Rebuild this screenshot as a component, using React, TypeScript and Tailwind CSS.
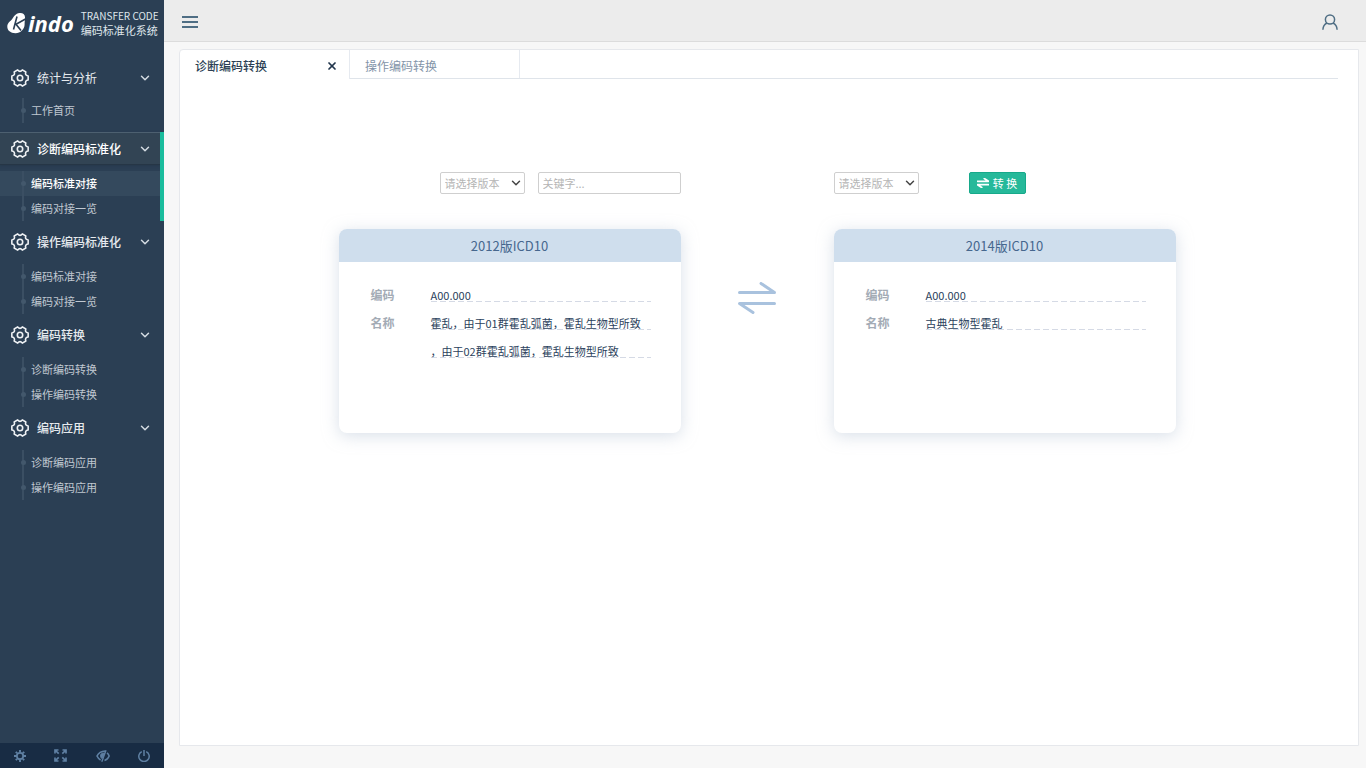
import { useState } from "react"
import { ChevronDown, X } from "lucide-react"

type Group = { title: string; items: string[] }

const groups: Group[] = [
  { title: "统计与分析", items: ["工作首页"] },
  { title: "诊断编码标准化", items: ["编码标准对接", "编码对接一览"] },
  { title: "操作编码标准化", items: ["编码标准对接", "编码对接一览"] },
  { title: "编码转换", items: ["诊断编码转换", "操作编码转换"] },
  { title: "编码应用", items: ["诊断编码应用", "操作编码应用"] },
]

// point on a circle around the centre of the 20x20 gear
function polar(deg: number, r: number) {
  const a = (deg * Math.PI) / 180
  return `${(10 + r * Math.cos(a)).toFixed(2)} ${(10 + r * Math.sin(a)).toFixed(2)}`
}

// six flat lobes joined by shallow dips
const gearPath =
  `M${polar(-14, 8.4)}` +
  [0, 60, 120, 180, 240, 300]
    .map((a) => `L${polar(a + 14, 8.4)}Q${polar(a + 30, 5.2)} ${polar(a + 46, 8.4)}`)
    .join("") +
  "Z"

function Gear() {
  return (
    <svg
      viewBox="0 0 20 20"
      className="size-5 shrink-0 text-[#eef1f4]"
      fill="none"
      stroke="currentColor"
      strokeWidth="1.600"
      strokeLinejoin="round"
      aria-hidden="true"
    >
      <path d={gearPath} />
      <circle cx="10" cy="10" r="2.700" />
    </svg>
  )
}

function Logo() {
  return (
    <div className="flex h-[45px] items-center pl-[7px]">
      <svg viewBox="0 0 20 22" className="h-[22px] w-5 shrink-0" aria-hidden="true">
        <path
          d="M12.500 1C15.500 .6 17.800 2.200 18 5C18.200 8 17.500 9.500 17.600 12.500C17.600 17 13.500 21.200 8.500 21.200C3.500 21.200 .3 18.500 .3 14.800C.3 10.500 3.200 9.800 5.200 7C7 4.300 8.500 1.500 12.500 1Z"
          fill="#fff"
        />
        <path d="M10 4.500L6.500 17.500M18.500 7L9 12.200L14 18.500" fill="none" stroke="#2b3f54" strokeWidth="1.600" />
      </svg>
      <span className="ml-px font-['Noto_Sans','Open_Sans',sans-serif] text-[22px] leading-[22px] font-bold text-white italic">
        indo
      </span>
      <div className="ml-[7px] text-[#dfe5eb] whitespace-nowrap">
        <div className="text-[10px] leading-[15px]">TRANSFER CODE</div>
        <div className="text-[11px] leading-[15px]">编码标准化系统</div>
      </div>
    </div>
  )
}

function MenuGroup({ group, active, first }: { group: Group; active: boolean; first: boolean }) {
  return (
    <section className={`flex ${first ? "mb-[9px]" : "mb-1"}`}>
      <div className="min-w-0 flex-1">
        <button
          className={`flex h-[33px] w-full items-center border-y pl-2.5 text-[12px] ${
            active
              ? "border-t-[#4d6070] border-b-[#263646] bg-[#324454] pr-2 font-medium text-white shadow-[0_1px_2px_#22334480]"
              : "border-transparent pr-3 text-[#e6eaee]"
          } ${first ? "font-normal" : "font-medium"}`}
        >
          <Gear />
          <span className="ml-[7px] flex-1 text-left">{group.title}</span>
          <ChevronDown className="size-3.5 text-[#d5dce3]" strokeWidth={2.5} />
        </button>
        <ul className={first ? "pt-1" : "pt-1.5"}>
          {group.items.map((item, i) => {
            const current = active && i === 0
            return (
              <li key={item} className={`flex h-[25px] items-center ${current ? "bg-[#34495d]" : ""}`}>
                <span className="ml-5 flex h-full w-1.5 items-center justify-center bg-[linear-gradient(#3b4f63,#3b4f63)] bg-[length:2px_100%] bg-center bg-no-repeat">
                  <span className="size-[5px] rounded-full bg-[#43586c]" />
                </span>
                <a
                  href="#"
                  className={`ml-[5px] text-[11px] ${current ? "font-medium text-white" : "text-[#c0c8d1]"}`}
                >
                  {item}
                </a>
              </li>
            )
          })}
        </ul>
      </div>
      {active && <div className="w-1 bg-[#1abc9c]" />}
    </section>
  )
}

function FooterTools() {
  return (
    <div className="flex h-[25px] items-center justify-around bg-[#182c44] text-[#5f80a3]">
      <button aria-label="设置">
        <svg viewBox="0 0 12 12" className="size-3" fill="none" stroke="currentColor">
          <circle cx="6" cy="6" r="3.200" strokeWidth="1.800" />
          <path
            d="M6 0v2M6 10v2M0 6h2M10 6h2M1.800 1.800l1.400 1.400M8.800 8.800l1.400 1.400M1.800 10.200l1.400-1.400M8.800 3.200l1.400-1.400"
            strokeWidth="1.900"
          />
        </svg>
      </button>
      <button aria-label="全屏">
        <svg viewBox="0 0 13 13" className="size-[13px]" fill="none" stroke="currentColor" strokeWidth="1.700">
          <path d="M1 4.500V1h3.500M1 1l3.700 3.700M8.500 1H12v3.500M12 1L8.300 4.700M1 8.500V12h3.500M1 12l3.700-3.700M8.500 12H12V8.500M12 12L8.300 8.300" />
        </svg>
      </button>
      <button aria-label="护眼">
        <svg viewBox="0 0 14 12" className="h-3 w-3.5" fill="none" stroke="currentColor">
          <path d="M9.300 1C5.500 1.300 2.500 3 1 6c.8 1.800 2 3.100 3.600 4" strokeWidth="1.600" />
          <path d="M8.500 3.200L6 8.500C4 7.500 4 4 6.200 3.300Z" fill="currentColor" />
          <path d="M10 .3L5.800 11.700" strokeWidth="1.400" />
          <path d="M11 2.800C12.200 3.700 12.800 4.800 13.200 6C12.300 8.200 10.800 9.800 8.500 10.500" strokeWidth="1.500" />
        </svg>
      </button>
      <button aria-label="退出">
        <svg viewBox="0 0 12 12" className="size-3" fill="none" stroke="currentColor" strokeWidth="1.500">
          <path d="M3.800 1.600A5.200 5.200 0 1 0 8.200 1.600M6 0v6" />
        </svg>
      </button>
    </div>
  )
}

function SwapArrows({ className, width }: { className: string; width: number }) {
  return (
    <svg
      viewBox="0 0 38 32"
      className={className}
      fill="none"
      stroke="currentColor"
      strokeWidth={width}
      strokeLinecap="round"
      strokeLinejoin="round"
      aria-hidden="true"
    >
      <path d="M1.500 10.500H36.500L23 1.500M36.500 21.500H1.500L15 30.500" />
    </svg>
  )
}

function VersionSelect({ label }: { label: string }) {
  return (
    <div className="relative w-[85px]">
      <select
        aria-label={label}
        className="block h-[22px] w-full appearance-none rounded-[2px] border border-[#cfcfcf] bg-white pl-1 text-[11px] leading-[20px] text-[#b5b5b5]"
      >
        <option>请选择版本</option>
      </select>
      <ChevronDown
        className="pointer-events-none absolute top-1 right-0.5 size-3.5 text-[#444]"
        strokeWidth={2.5}
      />
    </div>
  )
}

function CodeCard({ title, code, name }: { title: string; code: string; name: string[] }) {
  const line =
    "h-[22px] bg-[repeating-linear-gradient(90deg,#d5dae5_0_6px,transparent_6px_9px)] bg-[length:100%_1px] bg-bottom bg-no-repeat text-[11px] text-[#2b3f5c] whitespace-nowrap"
  return (
    <article className="h-[204px] overflow-hidden rounded-lg bg-white shadow-[0_3px_16px_#b4c2d480]">
      <h2 className="h-[33px] bg-[#cfdeed] text-center text-[13px] leading-[34px] text-[#46678e]">{title}</h2>
      <dl className="grid grid-cols-[60px_1fr] gap-y-1.5 pt-[18px] pr-[30px] pl-8 text-[12px] leading-[30px]">
        <dt className="h-[22px] font-bold text-[#a3abb5]">编码</dt>
        <dd className={line}>{code}</dd>
        <dt className="h-[22px] font-bold text-[#a3abb5]">名称</dt>
        <dd className="space-y-1.5">
          {name.map((part) => (
            <div key={part} className={line}>
              {part}
            </div>
          ))}
        </dd>
      </dl>
    </article>
  )
}

export default function App() {
  const [keyword, setKeyword] = useState("")

  return (
    <div className="flex min-h-screen bg-[#f7f7f7] font-['Noto_Sans_CJK_SC',sans-serif]">
      {/* Sidebar */}
      <aside className="flex w-[164px] shrink-0 flex-col bg-[#2b3f54]">
        <Logo />
        <nav className="flex-1 pt-4">
          {groups.map((g, i) => (
            <MenuGroup key={g.title} group={g} active={i === 1} first={i === 0} />
          ))}
        </nav>
        <FooterTools />
      </aside>

      <div className="flex min-w-0 flex-1 flex-col">
        {/* Top bar */}
        <header className="flex h-[42px] items-center justify-between border-b border-[#dcdcdc] bg-[#ececec] pr-7 pl-[18px] text-[#4f6e84]">
          <button aria-label="菜单" className="flex w-4 flex-col gap-[3px] pt-[3px]">
            <span className="h-0.5 bg-current" />
            <span className="h-0.5 bg-current" />
            <span className="h-0.5 bg-current" />
          </button>
          <button aria-label="用户" className="pt-[3px]">
            <svg viewBox="0 0 16 16" className="size-4" fill="none" stroke="currentColor" strokeWidth="1.500">
              <circle cx="8" cy="5.500" r="4.600" />
              <path d="M.9 15.700C1 12.500 2.500 10.200 5 9M15.100 15.700C15 12.500 13.500 10.200 11 9" />
            </svg>
          </button>
        </header>

        <main className="mt-[7px] mr-[7px] mb-[22px] ml-[15px] flex-1 rounded-tl border border-[#e6e8ec] bg-white pr-5">
          {/* Tabs */}
          <div role="tablist" className="flex h-[29px] text-[12px]">
            <div className="flex w-[170px] items-center justify-between border-r border-[#e6eaf0] pt-0.5 pr-[11px] pl-[15px]">
              <button role="tab" aria-selected="true" className="font-medium text-[#2b3f54]">
                诊断编码转换
              </button>
              <button aria-label="关闭">
                <X className="size-3 text-[#22364c]" strokeWidth={3.5} />
              </button>
            </div>
            <div className="flex flex-1 border-b border-[#dfe4ea]">
              <button
                role="tab"
                aria-selected="false"
                className="w-[170px] border-r border-[#e6eaf0] pt-[3px] pl-[15px] text-left text-[#8394a8]"
              >
                操作编码转换
              </button>
            </div>
          </div>

          <div className="pr-1">
            <div className="mx-auto grid w-full max-w-[837px] grid-cols-[1fr_153px_1fr] gap-y-[35px] pt-[93px]">
              {/* Filters */}
              <div className="flex justify-end gap-[13px]">
                <VersionSelect label="源版本" />
                <input
                  aria-label="关键字"
                  placeholder="关键字..."
                  value={keyword}
                  onChange={(e) => setKeyword(e.target.value)}
                  className="h-[22px] w-[143px] rounded-[2px] border border-[#cfcfcf] px-1 text-[11px] placeholder:text-[#b5b5b5]"
                />
              </div>
              <div />
              <div className="flex gap-[50px]">
                <VersionSelect label="目标版本" />
                <button className="flex h-[22px] w-[57px] items-center justify-center gap-1 rounded-[2px] border border-[#17a98a] bg-[#26b99a] text-[11px] text-white">
                  <SwapArrows className="h-2.5 w-3" width={5.5} />
                  转 换
                </button>
              </div>

              {/* Comparison */}
              <CodeCard
                title="2012版ICD10"
                code="A00.000"
                name={["霍乱，由于01群霍乱弧菌，霍乱生物型所致", "，由于02群霍乱弧菌，霍乱生物型所致"]}
              />
              <div className="flex justify-center pt-[53px]">
                <SwapArrows className="h-8 w-[38px] text-[#a9c2de]" width={3} />
              </div>
              <CodeCard title="2014版ICD10" code="A00.000" name={["古典生物型霍乱"]} />
            </div>
          </div>
        </main>
      </div>
    </div>
  )
}
